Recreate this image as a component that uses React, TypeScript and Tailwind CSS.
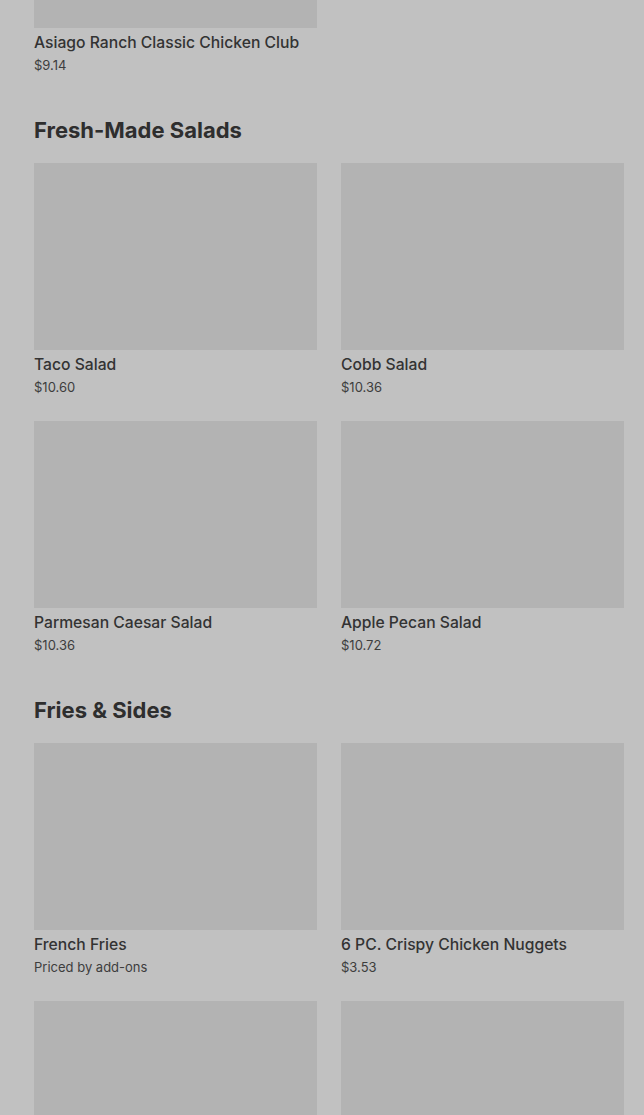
import React from "react";

type Item = { name: string; price: string };

function Card({ item, imgClass = "h-[187px]" }: { item: Item; imgClass?: string }) {
  return (
    <div className="flex flex-col">
      <div className={`${imgClass} w-full bg-[#b3b3b3]`} />
      <div className="pt-[5px] text-[15.7px] leading-[20px] font-medium text-[#333333]">{item.name}</div>
      <div className="mt-[2px] text-[13px] leading-[20px] text-[#3d3d3d]">{item.price}</div>
    </div>
  );
}

function Section({ title, items }: { title: string; items: Item[] }) {
  return (
    <section className="mt-[41px]">
      <h2 className="text-[22px] leading-[28px] font-bold text-[#2e2e2e]">{title}</h2>
      <div className="mt-[19px] grid grid-cols-2 gap-x-[24px] gap-y-[24px]">
        {items.map((it, i) => (
          <Card key={i} item={it} />
        ))}
      </div>
    </section>
  );
}

export default function App() {
  return (
    <div
      className="h-[1115px] overflow-hidden bg-[#c1c1c1] pl-[34px] pr-[20px]"
      style={{ fontFamily: "Inter, 'Noto Sans', sans-serif" }}
    >
      <div className="grid grid-cols-2 gap-x-[24px]">
        <Card item={{ name: "Asiago Ranch Classic Chicken Club", price: "$9.14" }} imgClass="h-[28px]" />
      </div>
      <Section
        title="Fresh-Made Salads"
        items={[
          { name: "Taco Salad", price: "$10.60" },
          { name: "Cobb Salad", price: "$10.36" },
          { name: "Parmesan Caesar Salad", price: "$10.36" },
          { name: "Apple Pecan Salad", price: "$10.72" },
        ]}
      />
      <Section
        title="Fries & Sides"
        items={[
          { name: "French Fries", price: "Priced by add-ons" },
          { name: "6 PC. Crispy Chicken Nuggets", price: "$3.53" },
          { name: "", price: "" },
          { name: "", price: "" },
        ]}
      />
    </div>
  );
}
